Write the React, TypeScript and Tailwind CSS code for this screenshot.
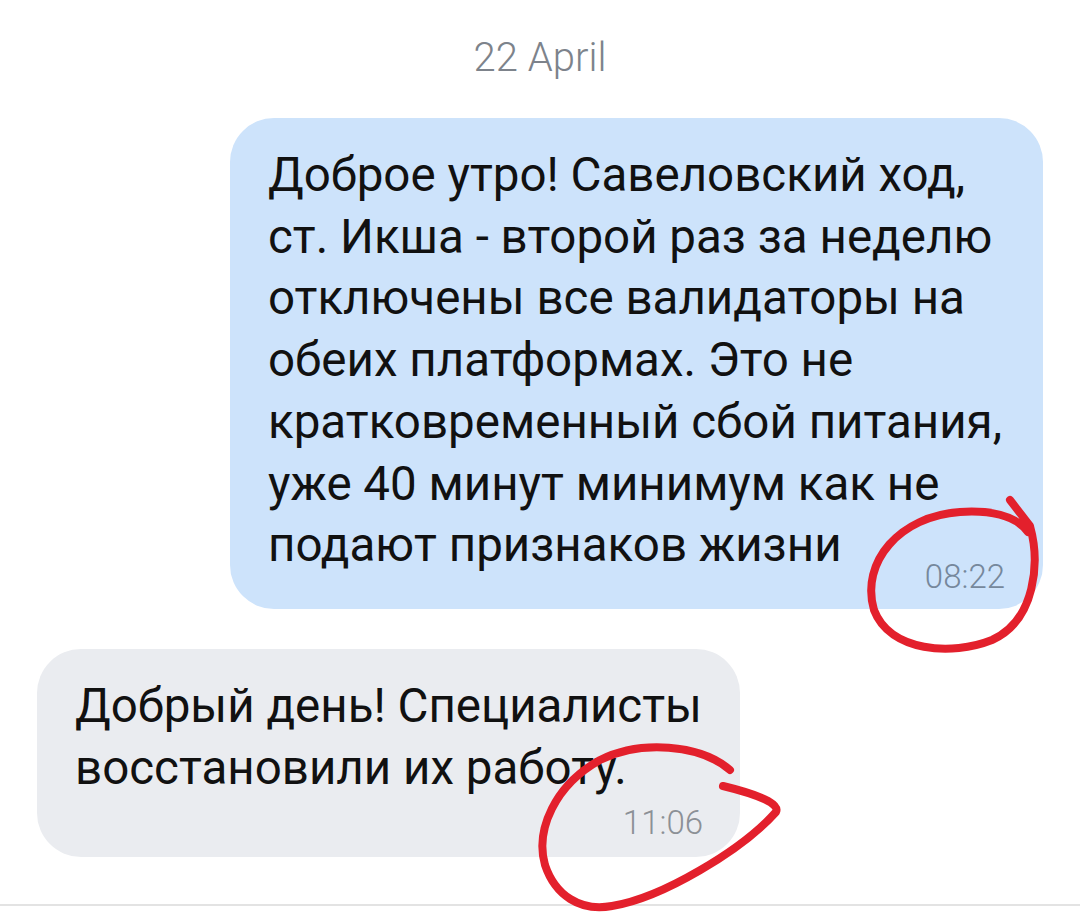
import React from "react";

export default function App() {
  const blueLines = [
    "Доброе утро! Савеловский ход,",
    "ст. Икша - второй раз за неделю",
    "отключены все валидаторы на",
    "обеих платформах. Это не",
    "кратковременный сбой питания,",
    "уже 40 минут минимум как не",
    "подают признаков жизни",
  ];
  const grayLines = ["Добрый день! Специалисты", "восстановили их работу."];
  return (
    <div className="relative w-[1080px] h-[912px] bg-white overflow-hidden flex flex-col font-[Roboto,sans-serif]">
      <div className="mt-[35px] text-center text-[40px] leading-[46px] font-light text-[#7d838b]">
        22 April
      </div>

      <div className="self-end mr-[37px] mt-[37px] w-[813px] rounded-[44px] bg-[#cde3fb] pl-[38px] pr-[38px] pt-[27px] pb-[14px]">
        <div className="text-[47.5px] leading-[61.7px] text-[#111] whitespace-nowrap">
          {blueLines.map((l, i) => (
            <div key={i}>{l}</div>
          ))}
        </div>
        <div className="-mt-[18px] text-right pr-0 text-[33px] leading-[36px] font-light text-[#76889c]">
          08:22
        </div>
      </div>

      <div className="self-start ml-[37px] mt-[40px] w-[703px] rounded-[44px] bg-[#eaecf0] pl-[38px] pr-[37px] pt-[27px] pb-[16px]">
        <div className="text-[47.5px] leading-[61.7px] text-[#111] whitespace-nowrap">
          {grayLines.map((l, i) => (
            <div key={i}>{l}</div>
          ))}
        </div>
        <div className="mt-[6px] text-right text-[33px] leading-[36px] font-light text-[#8c9096]">
          11:06
        </div>
      </div>

      <div className="mt-auto mb-[6px] h-[2px] bg-[#e3e3e3]" />

      <svg
        className="absolute inset-0 pointer-events-none"
        width="1080"
        height="912"
        viewBox="0 0 1080 912"
      >
        <path
          d="M 1010 500 L 1030 526 C 1040 562, 1036 620, 992 640 C 952 656, 890 652, 874 610 C 860 562, 900 516, 960 512 C 992 510, 1016 516, 1028 532"
          fill="none"
          stroke="#e3202c"
          strokeWidth="8"
          strokeLinecap="round"
          strokeLinejoin="round"
        />
        <path
          d="M 730 770 C 700 744, 640 740, 600 760 C 555 785, 535 830, 545 865 C 555 895, 580 912, 612 906 C 662 898, 742 850, 776 812 C 780 804, 760 795, 723 786"
          fill="none"
          stroke="#e3202c"
          strokeWidth="8"
          strokeLinecap="round"
          strokeLinejoin="round"
        />
      </svg>
    </div>
  );
}
